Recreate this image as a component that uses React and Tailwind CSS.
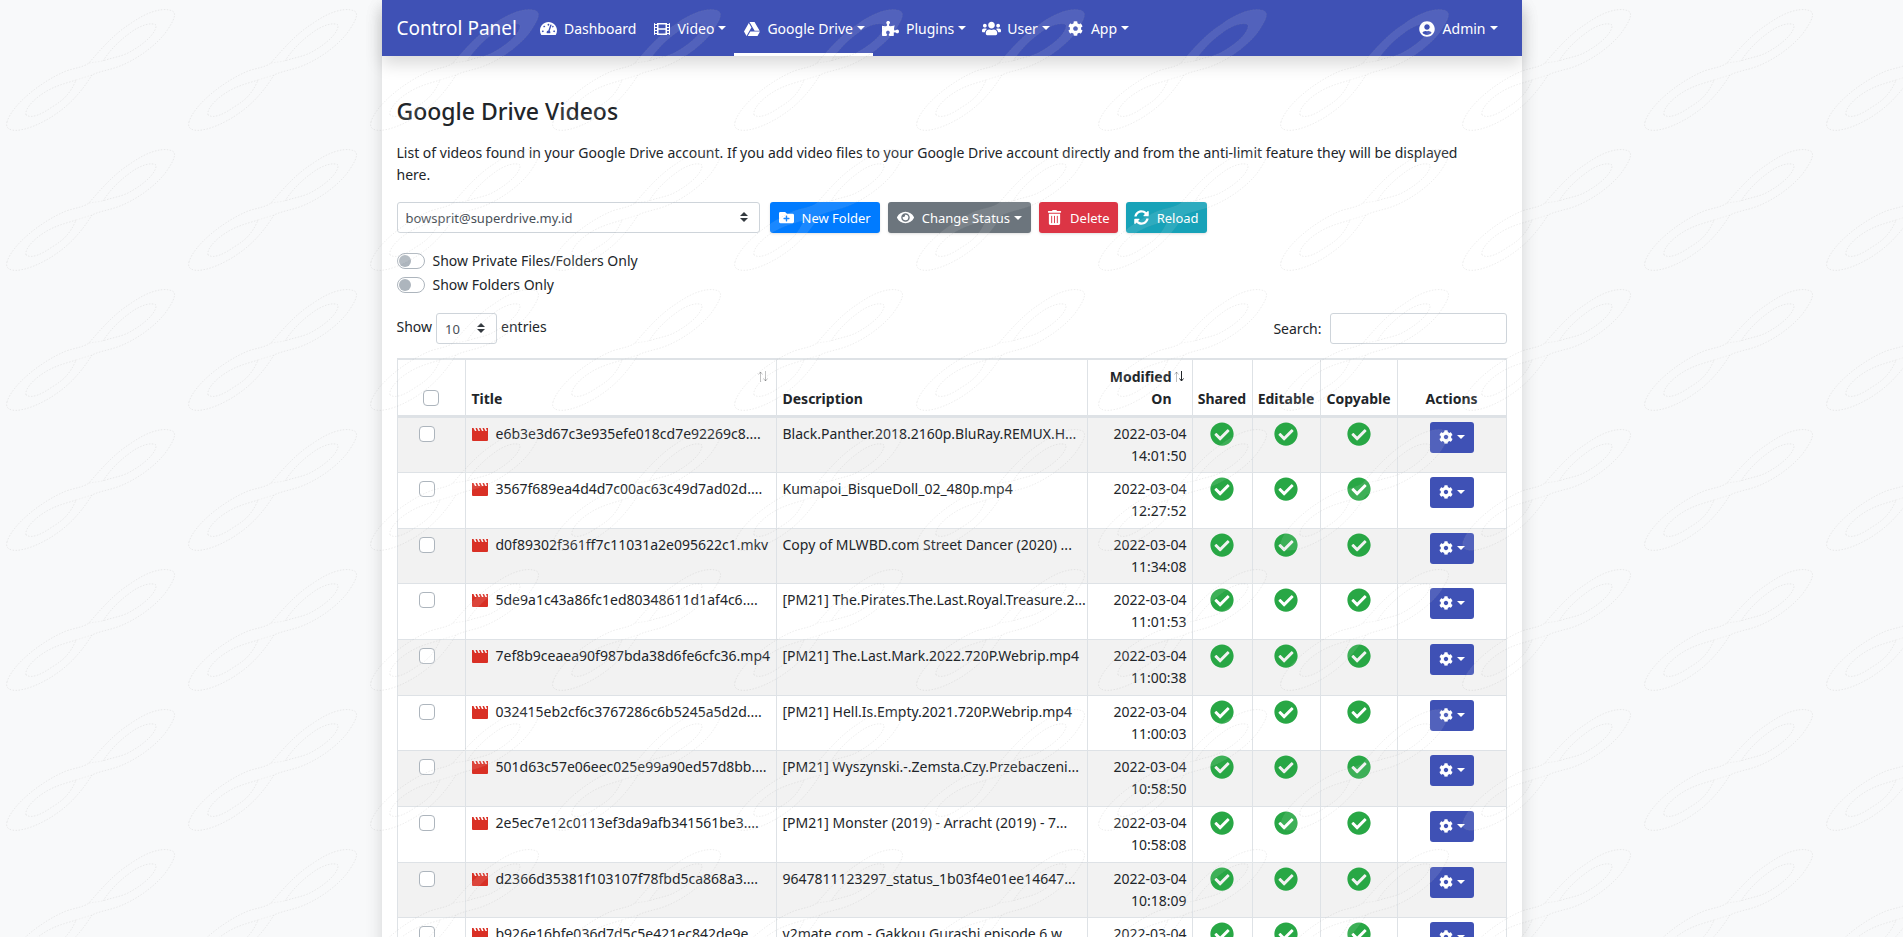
import React, { useState } from 'react';
import {
  FaTachometerAlt,
  FaFilm,
  FaGoogleDrive,
  FaPuzzlePiece,
  FaUsers,
  FaCog,
  FaUserCircle,
  FaFolderPlus,
  FaEye,
  FaTrashAlt,
  FaSyncAlt,
  FaCheckCircle,
} from 'react-icons/fa';

const navItems = [
  { label: 'Dashboard', icon: FaTachometerAlt, size: 17 },
  { label: 'Video', icon: FaFilm, size: 16, dropdown: true },
  { label: 'Google Drive', icon: FaGoogleDrive, size: 16, dropdown: true, active: true },
  { label: 'Plugins', icon: FaPuzzlePiece, size: 17, dropdown: true },
  { label: 'User', icon: FaUsers, size: 19, dropdown: true },
  { label: 'App', icon: FaCog, size: 15, dropdown: true },
];

const videos = [
  { title: 'e6b3e3d67c3e935efe018cd7e92269c8....', description: 'Black.Panther.2018.2160p.BluRay.REMUX.H...', date: '2022-03-04', time: '14:01:50' },
  { title: '3567f689ea4d4d7c00ac63c49d7ad02d....', description: 'Kumapoi_BisqueDoll_02_480p.mp4', date: '2022-03-04', time: '12:27:52' },
  { title: 'd0f89302f361ff7c11031a2e095622c1.mkv', description: 'Copy of MLWBD.com Street Dancer (2020) ...', date: '2022-03-04', time: '11:34:08' },
  { title: '5de9a1c43a86fc1ed80348611d1af4c6....', description: '[PM21] The.Pirates.The.Last.Royal.Treasure.2...', date: '2022-03-04', time: '11:01:53' },
  { title: '7ef8b9ceaea90f987bda38d6fe6cfc36.mp4', description: '[PM21] The.Last.Mark.2022.720P.Webrip.mp4', date: '2022-03-04', time: '11:00:38' },
  { title: '032415eb2cf6c3767286c6b5245a5d2d....', description: '[PM21] Hell.Is.Empty.2021.720P.Webrip.mp4', date: '2022-03-04', time: '11:00:03' },
  { title: '501d63c57e06eec025e99a90ed57d8bb....', description: '[PM21] Wyszynski.-.Zemsta.Czy.Przebaczeni...', date: '2022-03-04', time: '10:58:50' },
  { title: '2e5ec7e12c0113ef3da9afb341561be3....', description: '[PM21] Monster (2019) - Arracht (2019) - 7...', date: '2022-03-04', time: '10:58:08' },
  { title: 'd2366d35381f103107f78fbd5ca868a3....', description: '9647811123297_status_1b03f4e01ee14647...', date: '2022-03-04', time: '10:18:09' },
  { title: 'b926e16bfe036d7d5c5e421ec842de9e....', description: 'y2mate.com - Gakkou Gurashi episode 6 w...', date: '2022-03-04', time: '10:12:44' },
];

const Caret = () => (
  <span className="inline-block border-x-4 border-t-4 border-x-transparent border-t-current" />
);

const RibbonOverlay = () => (
  <svg className="pointer-events-none fixed inset-0 z-50 h-full w-full" aria-hidden="true">
    <defs>
      <pattern id="ribbon" width="182" height="140" patternUnits="userSpaceOnUse">
        <path
          fill="#fff"
          fillOpacity="0.1"
          fillRule="evenodd"
          stroke="#888"
          strokeOpacity="0.26"
          strokeWidth="0.6"
          strokeDasharray="1.5 1.5"
          d="M7 122C12 105 40 82 66 71C75 68 84 67 89 63C100 50 115 33 130 24C145 13 160 8 169 10C177 11 176 17 168 29C160 42 140 58 120 66C110 70 100 71 92 75C85 86 75 100 60 111C40 126 20 132 12 130C7 129 6 126 7 122ZM26 115C24 108 38 94 55 87C62 84 70 82 76 80C72 90 66 99 52 107C42 114 32 119 26 115ZM103 61C110 50 120 40 130 33C140 25 152 22 156 25C157 32 145 44 128 53C120 57 110 58 103 61Z"
        />
        <path
          fill="none"
          stroke="#888"
          strokeOpacity="0.16"
          strokeWidth="0.6"
          strokeDasharray="1.5 1.5"
          d="M89 63L103 61M76 80L92 75"
        />
      </pattern>
    </defs>
    <rect width="100%" height="100%" fill="url(#ribbon)" />
  </svg>
);

const MovieIcon = () => (
  <svg className="mt-[2px] h-[13px] w-4 shrink-0" viewBox="0 0 16 13" aria-hidden="true">
    <path
      fill="#d93025"
      d="M0 0h1.500l1.500 3h1.500L3.500 0h1.500l1.500 3H8L7 0h1.500L10 3h1.500l-1-3H12l1.500 3H15l-1-3h2v12a1 1 0 0 1-1 1H1a1 1 0 0 1-1-1z"
    />
  </svg>
);

const SelectArrows = () => (
  <svg className="pointer-events-none absolute right-3 top-[10px] h-[10px] w-2" viewBox="0 0 8 10" aria-hidden="true">
    <path fill="#343a40" d="M4 0l4 4H0zM4 10L0 6h8z" />
  </svg>
);

const SortArrows = ({ desc }) => (
  <svg className="h-[11px] w-[10px] shrink-0" viewBox="0 0 10 11" fill="none" aria-hidden="true">
    <path stroke="#212529" strokeOpacity="0.3" d="M2.500 11V1M0.500 3.500L2.500 1l2 2.500" />
    <path stroke="#212529" strokeOpacity={desc ? 1 : 0.3} d="M7.500 0v10M5.500 7.500l2 2.500 2-2.500" />
  </svg>
);

const NavLink = ({ item }) => {
  const Icon = item.icon;
  return (
    <a
      href="#"
      className={`flex h-14 items-center border-b-[3px] px-2 pt-1 ${item.active ? 'border-white' : 'border-transparent'}`}
    >
      <span className="mr-1.5 flex w-[19px] justify-center">
        <Icon size={item.size} />
      </span>
      {item.label}
      {item.dropdown && <span className="mb-[2px] ml-1 flex"><Caret /></span>}
    </a>
  );
};

const Checkbox = ({ label, checked, onChange }) => (
  <input
    type="checkbox"
    aria-label={label}
    checked={checked}
    onChange={onChange}
    className="block h-4 w-4 appearance-none rounded border border-[#adb5bd] bg-white checked:border-[#007bff] checked:bg-[#007bff]"
  />
);

const Switch = ({ id, label }) => (
  <div className="flex h-6 items-center gap-2">
    <input
      id={id}
      type="checkbox"
      className="h-4 w-7 appearance-none rounded-full border border-[#adb5bd] bg-white p-px before:block before:h-3 before:w-3 before:rounded-full before:bg-[#adb5bd] checked:before:translate-x-3"
    />
    <label htmlFor={id}>{label}</label>
  </div>
);

const btn = 'flex h-[31px] items-center rounded-[3px] text-[13px] text-white shadow-sm';
const select = 'h-[31px] w-full appearance-none rounded-[3px] border border-[#ced4da] bg-white px-2 text-[13px] text-[#495057]';
const th = 'border border-t-2 border-b-[3px] border-[#dee2e6] pb-[5px] align-bottom font-bold';
const td = 'border border-[#dee2e6] pl-[6px] pr-[5px] pt-[5px] align-top';
const tdIcon = 'border border-[#dee2e6] pt-1 align-top';

const App = () => {
  const [selected, setSelected] = useState([]);

  const toggleAll = () => {
    setSelected(prev => (prev.length === videos.length ? [] : videos.map(v => v.title)));
  };

  const toggleRow = (title) => {
    setSelected(prev =>
      prev.includes(title) ? prev.filter(t => t !== title) : [...prev, title]
    );
  };

  return (
    <div className="h-screen overflow-hidden bg-[#f8f9fa] font-['Noto_Sans',sans-serif] text-[14px] leading-[22px] text-[#212529]">
      <RibbonOverlay />
      <div className="mx-auto min-h-screen max-w-[1140px] bg-white shadow-[0_8px_16px_rgba(0,0,0,0.15)]">
        {/* Navbar */}
        <nav className="flex h-14 items-center bg-[#3f51b5] pl-[15px] pr-4 text-white shadow-[0_8px_16px_rgba(0,0,0,0.15)]">
          <a href="#" className="mr-[14px] text-[19px]">Control Panel</a>
          <div className="flex flex-1">
            {navItems.map(item => (
              <NavLink key={item.label} item={item} />
            ))}
          </div>
          <NavLink item={{ label: 'Admin', icon: FaUserCircle, size: 16, dropdown: true }} />
        </nav>

        <main className="px-[15px] pt-10">
          <h1 className="text-[23px] font-medium leading-[30px]">Google Drive Videos</h1>
          <p className="mt-4 pr-5">
            List of videos found in your Google Drive account. If you add video files to your Google Drive account directly and from the anti-limit feature they will be displayed here.
          </p>

          {/* Toolbar */}
          <div className="mt-4 flex gap-2">
            <div className="relative mr-[2px] w-[363px]">
              <select aria-label="Account" className={select}>
                <option>bowsprit@superdrive.my.id</option>
              </select>
              <SelectArrows />
            </div>
            <button type="button" className={`${btn} bg-[#007bff] px-[9px]`}>
              <FaFolderPlus size={15} className="mr-2" />
              New Folder
            </button>
            <button type="button" className={`${btn} bg-[#6c757d] px-[9px]`}>
              <FaEye size={17} className="mr-2" />
              Change Status
              <span className="ml-1 flex"><Caret /></span>
            </button>
            <button type="button" className={`${btn} bg-[#dc3545] px-2`}>
              <FaTrashAlt size={15} className="mr-2" />
              Delete
            </button>
            <button type="button" className={`${btn} bg-[#17a2b8] px-2`}>
              <FaSyncAlt size={15} className="mr-2" />
              Reload
            </button>
          </div>

          <div className="mt-4">
            <Switch id="private-only" label="Show Private Files/Folders Only" />
            <Switch id="folders-only" label="Show Folders Only" />
          </div>

          {/* Table controls */}
          <div className="mt-4 flex justify-between">
            <div className="flex gap-1">
              <label htmlFor="page-size" className="mt-[3px]">Show</label>
              <div className="relative w-[61px]">
                <select id="page-size" className={select}>
                  <option>10</option>
                  <option>25</option>
                  <option>50</option>
                </select>
                <SelectArrows />
              </div>
              <span className="mt-[3px]">entries</span>
            </div>
            <label className="flex items-center gap-2">
              Search:
              <input type="search" className="h-[31px] w-[177px] rounded-[3px] border border-[#ced4da] bg-white px-2" />
            </label>
          </div>

          <table className="mt-[14px] w-full table-fixed border-collapse">
            <colgroup>
              <col className="w-[68px]" />
              <col className="w-[311px]" />
              <col className="w-[311px]" />
              <col className="w-[105px]" />
              <col className="w-[60px]" />
              <col className="w-[68px]" />
              <col className="w-[77px]" />
              <col />
            </colgroup>
            <thead>
              <tr className="h-[57px]">
                <th className={th}>
                  <div className="mb-1 flex justify-center">
                    <Checkbox label="Select all" checked={selected.length === videos.length} onChange={toggleAll} />
                  </div>
                </th>
                <th className={`${th} pl-[6px] text-left`}>
                  <div className="flex h-11 items-end justify-between pr-2">
                    Title
                    <span className="mb-7"><SortArrows /></span>
                  </div>
                </th>
                <th className={`${th} pl-[6px] text-left`}>Description</th>
                <th className={`${th} text-right`}>
                  <div className="flex items-start justify-end gap-[2px] pr-2">
                    <span>Modified<br />On</span>
                    <span className="pt-[5px]"><SortArrows desc /></span>
                  </div>
                </th>
                <th className={`${th} whitespace-nowrap text-center`}>Shared</th>
                <th className={`${th} whitespace-nowrap text-center`}>Editable</th>
                <th className={`${th} whitespace-nowrap text-center`}>Copyable</th>
                <th className={`${th} text-center`}>Actions</th>
              </tr>
            </thead>
            <tbody>
              {videos.map(video => (
                <tr key={video.title} className="h-14 odd:bg-[#f2f2f2] nth-[3n]:h-[55px]">
                  <td className={tdIcon}>
                    <div className="mt-1 flex justify-center pr-2">
                      <Checkbox
                        label={`Select ${video.title}`}
                        checked={selected.includes(video.title)}
                        onChange={() => toggleRow(video.title)}
                      />
                    </div>
                  </td>
                  <td className={td}>
                    <div className="flex items-center gap-2 whitespace-nowrap">
                      <MovieIcon />
                      {video.title}
                    </div>
                  </td>
                  <td className={`${td} whitespace-nowrap`}>{video.description}</td>
                  <td className={`${td} text-right`}>
                    {video.date}
                    <br />
                    {video.time}
                  </td>
                  {['Shared', 'Editable', 'Copyable'].map(flag => (
                    <td key={flag} className={tdIcon}>
                      <FaCheckCircle size={24} title={flag} className="mx-auto text-[#28a745]" />
                    </td>
                  ))}
                  <td className={tdIcon}>
                    <button type="button" aria-label="Actions" className="mx-auto flex h-[31px] w-11 items-center justify-center gap-1 rounded-[3px] bg-[#3f51b5] text-white">
                      <FaCog size={14} />
                      <Caret />
                    </button>
                  </td>
                </tr>
              ))}
            </tbody>
          </table>
        </main>
      </div>
    </div>
  );
};

export default App;
